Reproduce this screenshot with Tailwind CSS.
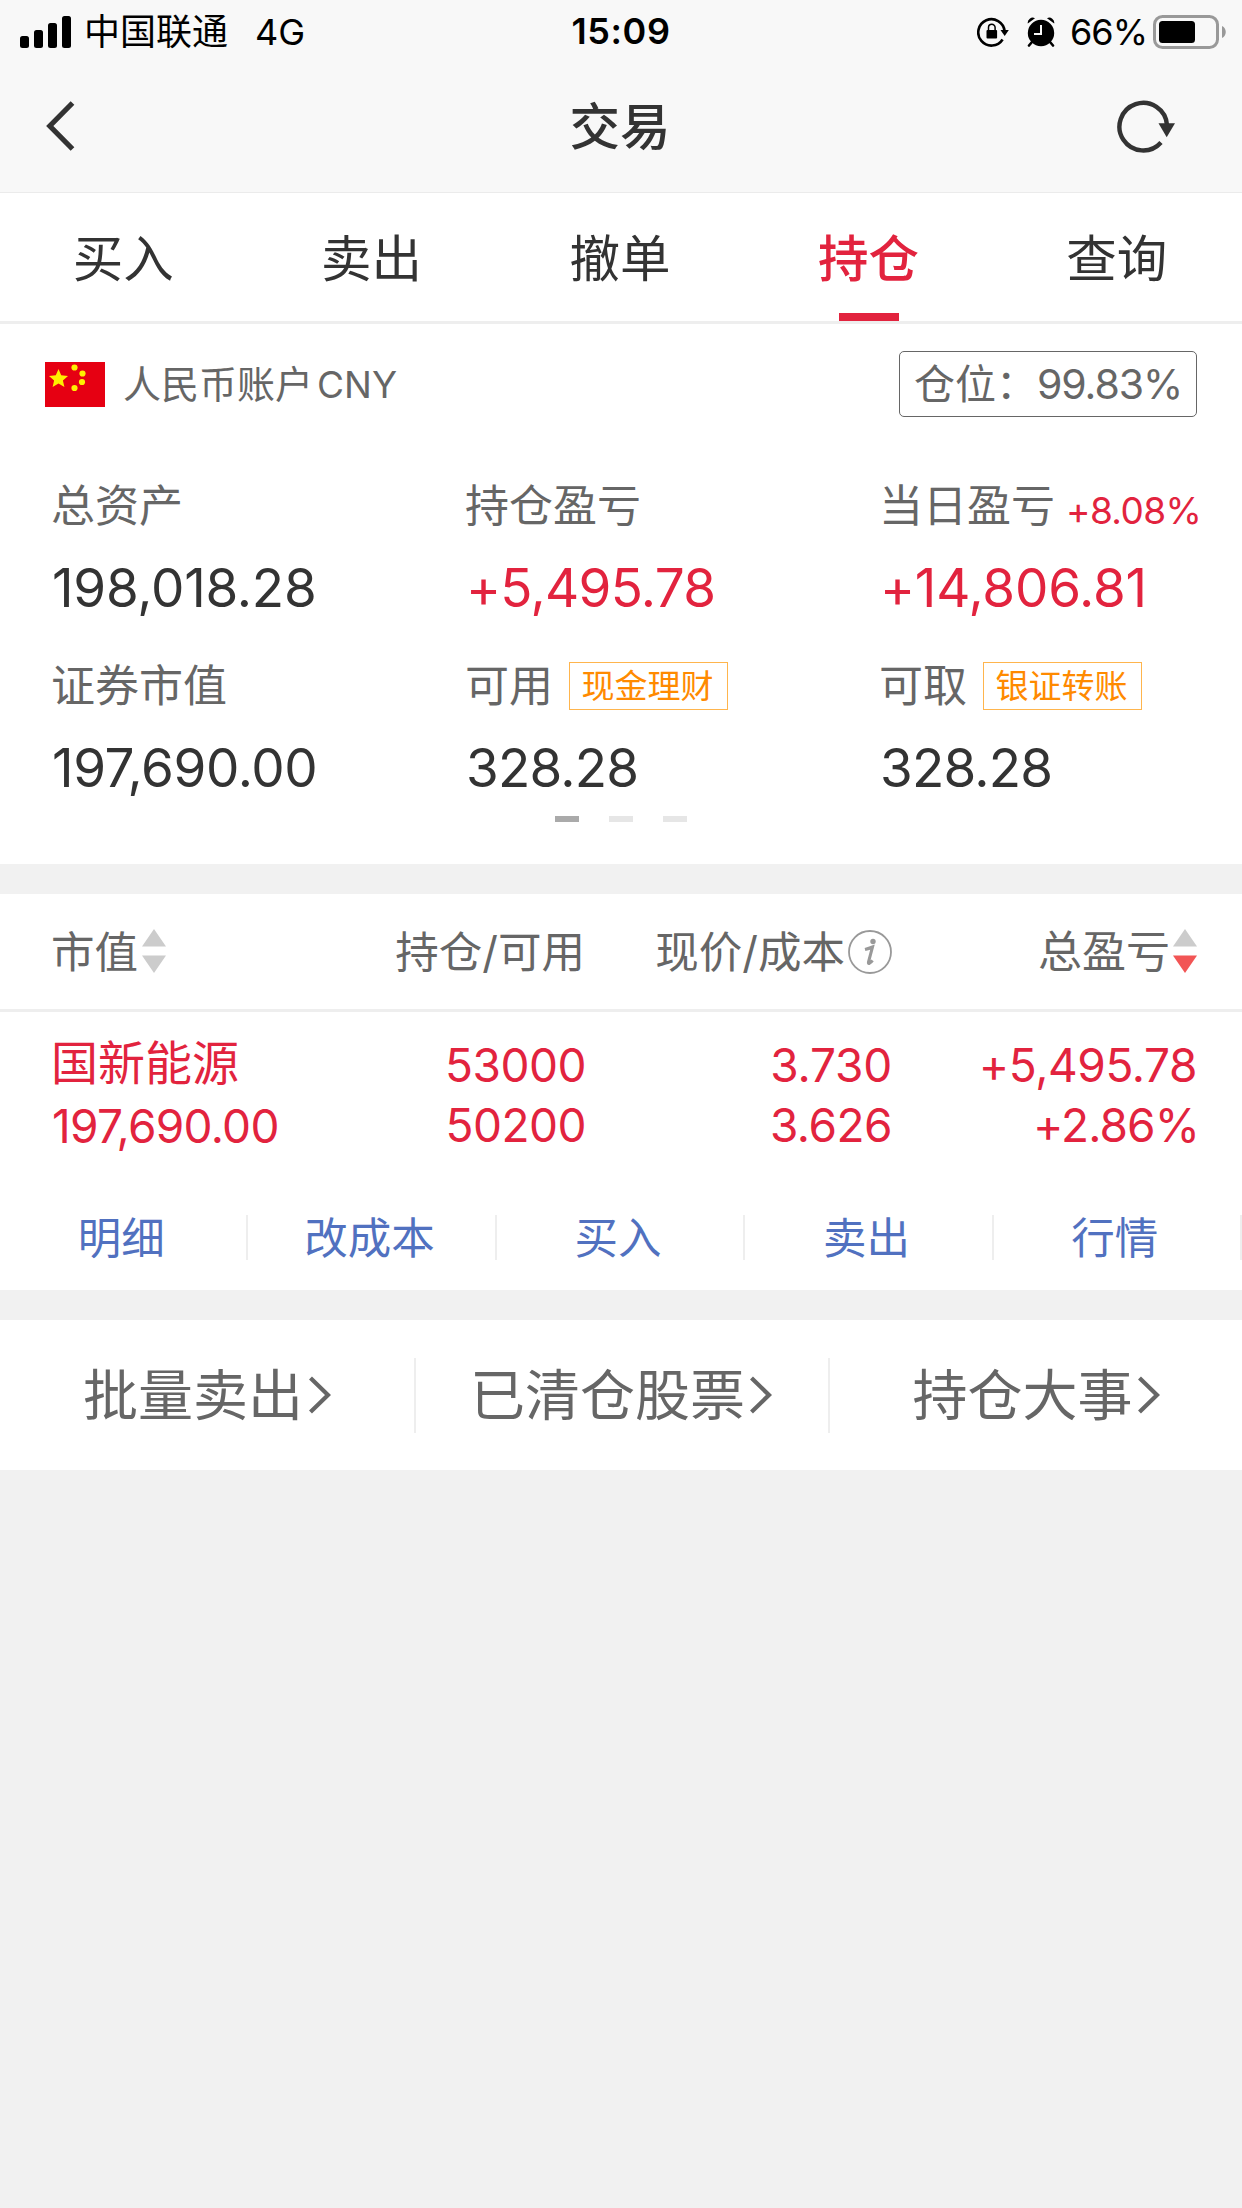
<!DOCTYPE html>
<html lang="zh-CN">
<head>
  <meta charset="UTF-8" />
  <meta name="viewport" content="width=1242" />
  <title>交易 - 持仓</title>
  <script src="https://cdn.jsdelivr.net/npm/@tailwindcss/browser@4"></script>
</head>
<body class="w-[1242px] min-h-screen bg-[#f1f1f1] text-[#333] font-['Inter','Noto_Sans_CJK_SC',sans-serif] overflow-x-hidden whitespace-nowrap">

  <header class="h-[193px] bg-[#f8f8f8] border-b border-[#ebebeb]">
    <!-- status bar -->
    <div class="h-[62px] grid grid-cols-3 text-[36px] leading-[62px] text-black">
      <div class="flex items-center pl-5">
        <svg class="w-[51px] h-8" viewBox="0 0 51 32">
          <rect x="0" y="20" width="9" height="12" rx="2.5" />
          <rect x="14" y="14" width="9" height="18" rx="2.5" />
          <rect x="28" y="7" width="9" height="25" rx="2.5" />
          <rect x="42" y="0" width="9" height="32" rx="2.5" />
        </svg>
        <span class="ml-[13px] pt-px">中国联通</span>
        <span class="ml-[27px]">4G</span>
      </div>
      <div class="text-center font-semibold tracking-[0.6px]">15:09</div>
      <div class="flex items-center justify-end pr-4">
        <svg class="w-8 h-[30px]" viewBox="0 0 32 30">
          <path d="M25.6 22.5A13.2 13.2 0 1 1 27.6 14" fill="none" stroke="#000" stroke-width="2.6" />
          <path d="M23.5 13h8.3l-4.1 6z" />
          <rect x="9.5" y="13" width="10.6" height="8.6" rx="1" />
          <path d="M11.5 13.5v-3a3.3 3.3 0 0 1 6.6 0v3" fill="none" stroke="#000" stroke-width="1.5" />
        </svg>
        <svg class="ml-[18px] w-7 h-[30px]" viewBox="0 0 28 30">
          <circle cx="14" cy="16" r="13.2" />
          <path d="M.8 6.5A5 5 0 0 1 8 1.2zM27.2 6.5A5 5 0 0 0 20 1.2z" />
          <path d="M5 25l-3 3.5M23 25l3 3.5" stroke="#000" stroke-width="2.6" stroke-linecap="round" />
          <path d="M14 8v9H7" fill="none" stroke="#f8f8f8" stroke-width="2" />
        </svg>
        <span class="ml-[15px] tracking-[-1px]">66%</span>
        <svg class="ml-1.5 w-[73px] h-[34px]" viewBox="0 0 73 34">
          <rect x="1.5" y="1.5" width="63" height="31" rx="8" fill="none" stroke="#999" stroke-width="3" />
          <rect x="6" y="6" width="36" height="22" rx="3.5" />
          <path d="M69 11c5 2 5 10 0 12z" fill="#999" />
        </svg>
      </div>
    </div>
    <!-- title bar -->
    <div class="h-[128px] flex items-center justify-between pl-[46px] pr-[66px]">
      <svg class="w-[78px] h-[50px]" viewBox="0 0 78 50">
        <path d="M26.5 2L3.8 25l22.7 23" fill="none" stroke="#333" stroke-width="5.2" />
      </svg>
      <h1 class="pt-px text-[50.5px] font-medium">交易</h1>
      <svg class="w-[60px] h-[54px]" viewBox="0 0 60 54">
        <path d="M45 43.5A23.8 23.8 0 1 1 51 26" fill="none" stroke="#333" stroke-width="4.4" />
        <path d="M42.5 24.2h16.5L50.7 38.2z" fill="#333" />
      </svg>
    </div>
  </header>

  <nav class="h-[131px] grid grid-cols-5 bg-white border-b-3 border-[#eee] text-[50.5px] leading-[124px] text-center">
    <a class="pt-1 pr-[2px]">买入</a>
    <a class="pt-1 pr-[2px]">卖出</a>
    <a class="pt-1 pr-[2px]">撤单</a>
    <a class="relative pt-1 pr-[2px] font-medium text-[#e2233e]">持仓<i class="absolute bottom-0 left-[94px] w-[60px] h-2 bg-[#e2233e]"></i></a>
    <a class="pt-1 pr-[2px]">查询</a>
  </nav>

  <section class="h-[540px] bg-white">
    <div class="h-[120px] flex items-center pl-[45px] pr-[45px] text-[#666]">
      <svg class="w-[60px] h-[45px]" viewBox="0 0 60 45">
        <rect width="60" height="45" fill="#e60012" />
        <g fill="#fff000">
          <path d="M13.5 7l2.7 6.3 6.800.6-5.100 4.500 1.500 6.700-5.900-3.500-5.900 3.500 1.500-6.700L4 13.900l6.800-.6z" />
          <circle cx="29.5" cy="5.5" r="3.1" />
          <circle cx="37.5" cy="11.5" r="3.1" />
          <circle cx="37" cy="20" r="3.1" />
          <circle cx="29.5" cy="26" r="3.1" />
        </g>
      </svg>
      <span class="ml-[18px] pt-px text-[38px]">人民币账户<span class="ml-1 text-[37px]">CNY</span></span>
      <span class="ml-auto w-[298px] h-[66px] flex items-center justify-between pt-[2px] pl-[14px] pr-[14px] border border-[#666] rounded-[5px] text-[41px]"><span>仓位：</span><span class="tracking-[-1.1px]">99.83%</span></span>
    </div>
    <div class="grid grid-cols-[414px_414px_1fr] pl-[52px]">
      <div class="h-[180px]">
        <div class="h-[122px] -ml-px leading-[124px] text-[44px] text-[#666]">总资产</div>
        <div class="-mt-5 leading-[84px] text-[53px] tracking-[-0.25px]">198,018.28</div>
      </div>
      <div class="h-[180px]">
        <div class="h-[122px] -ml-px leading-[124px] text-[44px] text-[#666]">持仓盈亏</div>
        <div class="-mt-5 leading-[84px] text-[53px] tracking-[-0.7px] text-[#e2233e]">+5,495.78</div>
      </div>
      <div class="h-[180px]">
        <div class="h-[122px] -ml-px leading-[124px] text-[44px] text-[#666]">当日盈亏<span class="ml-[11px] align-[-2px] text-[37px] tracking-[-0.6px] text-[#e2233e]">+8.08%</span></div>
        <div class="-mt-5 leading-[84px] text-[53px] tracking-[-0.2px] text-[#e2233e]">+14,806.81</div>
      </div>
      <div class="h-[180px]">
        <div class="h-[122px] -ml-px leading-[124px] text-[44px] text-[#666]">证券市值</div>
        <div class="-mt-5 leading-[84px] text-[53px] tracking-[-0.4px]">197,690.00</div>
      </div>
      <div class="h-[180px]">
        <div class="h-[122px] -ml-px pt-[2px] flex items-center text-[44px] text-[#666]">可用<span class="ml-4 w-[159px] h-12 leading-[46px] border-[1.5px] border-[#ffb54d] pr-[2px] text-center text-[33px] text-[#ff8a00]">现金理财</span></div>
        <div class="-mt-5 leading-[84px] text-[53px] tracking-[-0.8px]">328.28</div>
      </div>
      <div class="h-[180px]">
        <div class="h-[122px] -ml-px pt-[2px] flex items-center text-[44px] text-[#666]">可取<span class="ml-4 w-[159px] h-12 leading-[46px] border-[1.5px] border-[#ffb54d] pr-[2px] text-center text-[33px] text-[#ff8a00]">银证转账</span></div>
        <div class="-mt-5 leading-[84px] text-[53px] tracking-[-0.8px]">328.28</div>
      </div>
    </div>
    <div class="mt-3 flex justify-center gap-[30px]">
      <i class="w-6 h-1.5 bg-[#aaa]"></i>
      <i class="w-6 h-1.5 bg-[#e6e6e6]"></i>
      <i class="w-6 h-1.5 bg-[#e6e6e6]"></i>
    </div>
  </section>

  <section class="mt-[30px] h-[396px] bg-white">
    <div class="h-[118px] grid grid-cols-[312px_222px_307px_1fr] items-center pl-[51px] pr-[45px] border-b-3 border-[#eee] text-[43.5px] leading-[113px] text-[#666]">
      <div class="flex items-center"><span class="pt-[2px]">市值</span>
        <svg class="ml-1 mb-[2px] w-6 h-11" viewBox="0 0 24 44" fill="#ccc"><path d="M0 17.5L12 0l12 17.5zM0 26.5h24L12 44z" /></svg>
      </div>
      <div class="pt-[2px] text-right">持仓/可用</div>
      <div class="flex items-center justify-end"><span class="pt-[2px]">现价/成本</span>
        <svg class="ml-[3px] w-11 h-11" viewBox="0 0 44 44">
          <circle cx="22" cy="22" r="21" fill="none" stroke="#999" stroke-width="1.8" />
          <circle cx="25" cy="11.5" r="2.7" fill="#999" />
          <path d="M17 19.5q4-1 7.5-2.5L20.5 32q-.5 2 1 1.3 1.5-.8 3-3" fill="none" stroke="#999" stroke-width="3" />
        </svg>
      </div>
      <div class="flex items-center justify-end"><span class="pt-[2px] text-[44px]">总盈亏</span>
        <svg class="ml-[3px] mb-[2px] w-6 h-11" viewBox="0 0 24 44"><path d="M0 17.5L12 0l12 17.5z" fill="#ccc" /><path d="M0 26.5h24L12 44z" fill="#f25555" /></svg>
      </div>
    </div>
    <div class="h-[173px] grid grid-cols-[312px_222px_306px_1fr] pl-[52px] pr-[45px] pt-[23px] text-[46px] leading-[60px] tracking-[-0.5px] text-[#e2233e]">
      <div>
        <p class="-mt-[2px] -ml-px text-[47px] tracking-normal">国新能源</p>
        <p class="mt-[3px] tracking-[-0.7px]">197,690.00</p>
      </div>
      <div class="text-right">
        <p>53000</p>
        <p>50200</p>
      </div>
      <div class="text-right">
        <p class="tracking-[-0.2px]">3.730</p>
        <p>3.626</p>
      </div>
      <div class="text-right">
        <p class="tracking-[-0.4px]">+5,495.78</p>
        <p class="-mr-[2px] tracking-[-0.9px]">+2.86%</p>
      </div>
    </div>
    <div class="pt-[30px] grid grid-cols-5 text-center text-[43.5px] leading-[47px] text-[#5171c0]">
      <a class="h-[45px] pr-1 border-r-2 border-[#eee]">明细</a>
      <a class="h-[45px] pr-1 border-r-2 border-[#eee]">改成本</a>
      <a class="h-[45px] pr-1 border-r-2 border-[#eee]">买入</a>
      <a class="h-[45px] pr-1 border-r-2 border-[#eee]">卖出</a>
      <a class="h-[45px] pr-1 border-r-2 border-[#eee]">行情</a>
    </div>
  </section>

  <section class="mt-[30px] h-[150px] grid grid-cols-[416px_414px_1fr] items-center bg-white text-[55px] leading-[75px] text-[#666]">
    <a class="flex items-center justify-center border-r-2 border-[#eee]">批量卖出
      <svg class="ml-[5px] w-[23px] h-[38px]" viewBox="0 0 23 38"><path d="M2.5 2L20 19 2.5 36" fill="none" stroke="#666" stroke-width="4.2" /></svg>
    </a>
    <a class="flex items-center justify-center pr-[2px] border-r-2 border-[#eee]">已清仓股票
      <svg class="ml-1 w-[23px] h-[38px]" viewBox="0 0 23 38"><path d="M2.5 2L20 19 2.5 36" fill="none" stroke="#666" stroke-width="4.2" /></svg>
    </a>
    <a class="flex items-center justify-center">持仓大事
      <svg class="ml-1 w-[23px] h-[38px]" viewBox="0 0 23 38"><path d="M2.5 2L20 19 2.5 36" fill="none" stroke="#666" stroke-width="4.2" /></svg>
    </a>
  </section>

</body>
</html>
